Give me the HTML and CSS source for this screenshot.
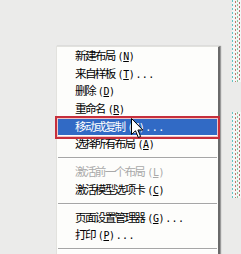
FILE: index.html
```html
<!DOCTYPE html>
<html lang="zh-CN">
<head>
<meta charset="utf-8">
<title>布局菜单</title>
<link rel="stylesheet" href="styles.css">
</head>
<body>
<div class="screen">
  <div class="layout-frame frame-a"></div>
  <div class="layout-frame frame-b"></div>

  <div class="menu">
    <ul class="menu-list">
      <li class="item">新建布局<span class="key">(<u>N</u>)</span></li>
      <li class="item">来自样板<span class="key">(<u>T</u>)</span><span class="dots">...</span></li>
      <li class="item">删除<span class="key">(<u>D</u>)</span></li>
      <li class="item">重命名<span class="key">(<u>R</u>)</span></li>
      <li class="item active">移动或复制<span class="key">(<u>M</u>)</span><span class="dots">...</span></li>
      <li class="item">选择所有布局<span class="key">(<u>A</u>)</span></li>
      <li class="sep"></li>
      <li class="item disabled">激活前一个布局<span class="key">(<u>L</u>)</span></li>
      <li class="item">激活模型选项卡<span class="key">(<u>C</u>)</span></li>
      <li class="sep"></li>
      <li class="item">页面设置管理器<span class="key">(<u>G</u>)</span><span class="dots">...</span></li>
      <li class="item">打印<span class="key">(<u>P</u>)</span><span class="dots">...</span></li>
      <li class="sep"></li>
    </ul>
  </div>

  <div class="annot"></div>

  <svg class="cursor" width="13" height="21" viewBox="0 0 13 21">
    <path d="M0.5 0.5 L0.5 16.5 L4.5 12.8 L7.3 19.5 L9.6 18.5 L6.9 12 L11.8 12 Z" fill="#fff" stroke="#000" stroke-width="1" stroke-linejoin="miter"/>
  </svg>
</div>
</body>
</html>
```

FILE: styles.css
```css
html, body {
  margin: 0;
  padding: 0;
}

body {
  width: 241px;
  height: 254px;
  overflow: hidden;
  background: #ebebea;
  font-family: "Noto Sans CJK SC", "Noto Sans", sans-serif;
}

.screen {
  position: relative;
  width: 241px;
  height: 254px;
  overflow: hidden;
  background: #ebebea;
}

/* dashed layout frames of the drawing area, on the right edge */
.layout-frame {
  position: absolute;
  left: 232px;
  width: 12px;
  background-color: #f3f6f6;
  background-image:
    repeating-linear-gradient(180deg, #5fc4c4 0 2px, transparent 2px 4px),
    repeating-linear-gradient(180deg, #c27a6a 0 2px, transparent 2px 4px),
    repeating-linear-gradient(180deg, #8cc49a 0 2px, transparent 2px 4px),
    repeating-linear-gradient(180deg, #bf6a6a 0 2px, transparent 2px 4px);
  background-size: 1px 100%, 1px 100%, 1px 100%, 1px 100%;
  background-position: 0 0, 3px 1px, 5px 0, 7px 2px;
  background-repeat: no-repeat;
}

.frame-a {
  top: 0;
  height: 82px;
}

.frame-b {
  top: 112px;
  height: 86px;
}

/* context menu */
.menu {
  position: absolute;
  left: 56px;
  top: 46px;
  width: 161px;
  height: 220px;
  background: #fdfdfb;
  border-left: 1px solid #e2e2de;
  border-top: 1px solid #e2e2de;
  border-right: 2px solid #6a6a6a;
  box-shadow: 1px 0 1px #9a9a9a;
}

.menu-list {
  list-style: none;
  margin: 0;
  padding: 0;
}

.item {
  height: 17.7px;
  line-height: 17.7px;
  padding-left: 18px;
  font-size: 11.6px;
  letter-spacing: -1.7px;
  color: #000;
  white-space: nowrap;
}

.key {
  font-family: "DejaVu Sans Mono", "Liberation Mono", monospace;
  font-size: 10px;
  letter-spacing: -0.4px;
  margin-left: 3px;
}

.dots {
  font-family: "DejaVu Sans Mono", "Liberation Mono", monospace;
  font-size: 10px;
  letter-spacing: 0.4px;
  margin-left: 1px;
}

.key u {
  text-decoration-thickness: 1px;
  text-underline-offset: 1px;
}

.item.active {
  background: #316ac5;
  color: #fff;
}

.item.disabled {
  color: #a9a9a9;
}

.sep {
  height: 10px;
  margin: 0 1px;
  background: linear-gradient(180deg, transparent 4px, #a6a6a6 4px 5px, #ffffff 5px 6px, transparent 6px);
}

/* red annotation rectangle over the selected item */
.annot {
  position: absolute;
  left: 55px;
  top: 116px;
  width: 161px;
  height: 19px;
  border: 2px solid #c62f3c;
  box-shadow: inset 0 0 0 1px #efc6c8;
}

.cursor {
  position: absolute;
  left: 131px;
  top: 118px;
}
```
